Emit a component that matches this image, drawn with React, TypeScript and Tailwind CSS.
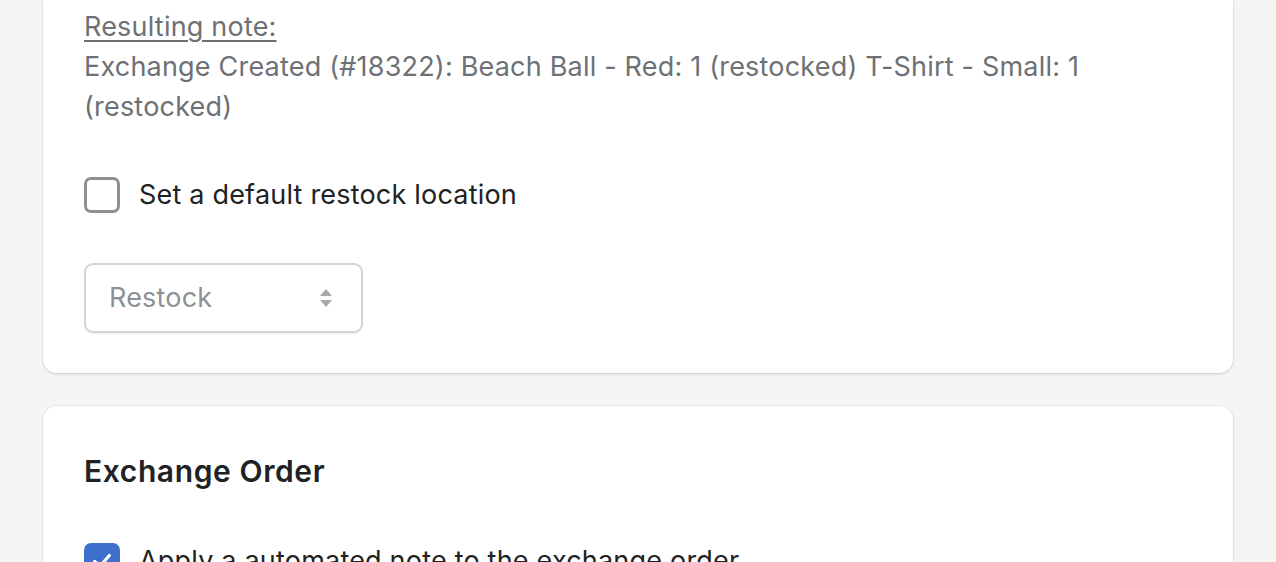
export default function App() {
  return (
    <div
      className="min-h-screen bg-[#f5f5f5] px-[43px] pb-10 text-[27px] tracking-[0.2px] text-[#202223]"
      style={{ fontFamily: "Inter, 'Noto Sans', sans-serif" }}
    >
      <div className="rounded-b-[14px] bg-white px-[41px] pt-[7px] pb-10 shadow-[0_1px_3px_rgba(0,0,0,0.15),0_0_0_1px_rgba(0,0,0,0.03)]">
        <div className="leading-[40px] text-[#6d7175]">
          <div className="underline underline-offset-4">Resulting note:</div>
          <p>
            Exchange Created (#18322): Beach Ball - Red: 1 (restocked) T-Shirt - Small: 1 (restocked)
          </p>
        </div>

        <label className="mt-[50px] flex items-center gap-[19px] leading-9">
          <span className="h-9 w-9 rounded-[7px] border-[3px] border-[#8c9196]" />
          <span>Set a default restock location</span>
        </label>

        <div className="mt-[50px] flex h-[70px] w-[279px] items-center justify-between rounded-[9px] border-2 border-[#d2d5d8] pr-[28px] pl-[23px] shadow-[0_1px_1px_rgba(0,0,0,0.06)]">
          <span className="text-[#8c9196]">Restock</span>
          <svg width="14" height="20" viewBox="0 0 14 20" fill="#a6a9ad">
            <path d="M7 1 L13 8 H1 Z" />
            <path d="M7 19 L13 12 H1 Z" />
          </svg>
        </div>
      </div>

      <div className="mt-[33px] rounded-[14px] bg-white px-[41px] pt-[45px] pb-10 shadow-[0_1px_3px_rgba(0,0,0,0.15),0_0_0_1px_rgba(0,0,0,0.03)]">
        <h2 className="text-[30px] leading-[40px] font-semibold tracking-[0.6px]">Exchange Order</h2>
        <label className="mt-[52px] flex items-center gap-[19px] leading-9">
          <span className="flex h-9 w-9 items-center justify-center rounded-[7px] bg-[#3f6fcc]">
            <svg width="22" height="22" viewBox="0 0 24 24" fill="none" stroke="white" strokeWidth="3.5" strokeLinecap="round" strokeLinejoin="round">
              <path d="M4 12.5 L9.5 18 L20 6" />
            </svg>
          </span>
          <span>Apply a automated note to the exchange order</span>
        </label>
      </div>
    </div>
  )
}
